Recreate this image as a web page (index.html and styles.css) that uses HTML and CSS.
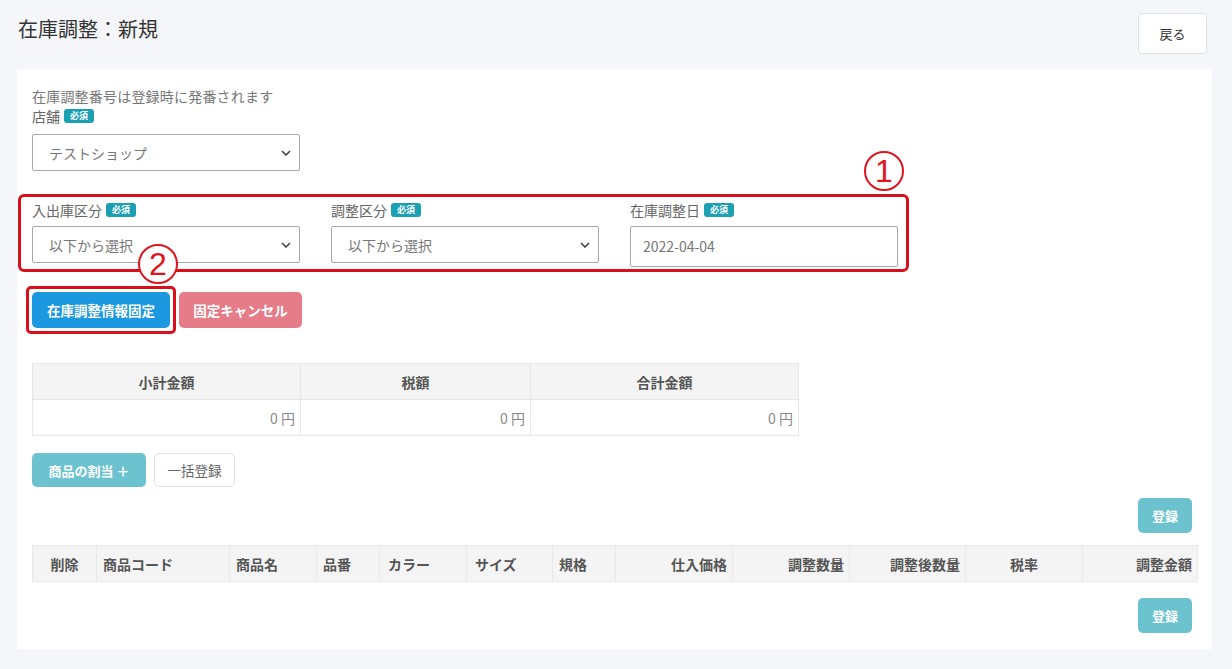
FILE: index.html
```html
<!DOCTYPE html>
<html lang="ja">
<head>
<meta charset="utf-8">
<title>在庫調整：新規</title>
<link rel="stylesheet" href="styles.css">
</head>
<body>
<header class="page-head">
  <h1 class="title">在庫調整：新規</h1>
  <button class="btn-back">戻る</button>
</header>
<main class="card">
  <p class="note">在庫調整番号は登録時に発番されます</p>
  <div class="label">店舗<span class="badge">必須</span></div>
  <div class="select shop">
    <span>テストショップ</span>
    <svg class="chev" width="10" height="6" viewBox="0 0 10 6"><path d="M1 1l4 4 4-4" fill="none" stroke="#444" stroke-width="1.6"/></svg>
  </div>

  <div class="mark-box">
    <div class="field">
      <div class="label">入出庫区分<span class="badge">必須</span></div>
      <div class="select">
        <span>以下から選択</span>
        <svg class="chev" width="10" height="6" viewBox="0 0 10 6"><path d="M1 1l4 4 4-4" fill="none" stroke="#444" stroke-width="1.6"/></svg>
      </div>
    </div>
    <div class="field">
      <div class="label">調整区分<span class="badge">必須</span></div>
      <div class="select">
        <span>以下から選択</span>
        <svg class="chev" width="10" height="6" viewBox="0 0 10 6"><path d="M1 1l4 4 4-4" fill="none" stroke="#444" stroke-width="1.6"/></svg>
      </div>
    </div>
    <div class="field">
      <div class="label">在庫調整日<span class="badge">必須</span></div>
      <div class="date">2022-04-04</div>
    </div>
    <div class="circ circ-1">1</div>
    <div class="circ circ-2">2</div>
  </div>

  <div class="action-row">
    <div class="mark-btn"><button class="btn btn-blue">在庫調整情報固定</button></div>
    <button class="btn btn-pink">固定キャンセル</button>
  </div>

  <table class="sum">
    <colgroup><col class="c268"><col class="c230"><col class="c268"></colgroup>
    <thead><tr><th>小計金額</th><th>税額</th><th>合計金額</th></tr></thead>
    <tbody><tr><td>0 円</td><td>0 円</td><td>0 円</td></tr></tbody>
  </table>

  <div class="tool-row">
    <button class="btn btn-teal">商品の割当 ＋</button>
    <button class="btn btn-white">一括登録</button>
  </div>

  <div class="reg-row"><button class="btn btn-teal btn-reg">登録</button></div>

  <table class="items">
    <colgroup>
      <col class="w64"><col class="w133"><col class="w87"><col class="w63"><col class="w87"><col class="w86"><col class="w63"><col class="w117"><col class="w117"><col class="w116"><col class="w117"><col class="w115">
    </colgroup>
    <thead>
      <tr>
        <th class="ac">削除</th>
        <th>商品コード</th>
        <th>商品名</th>
        <th>品番</th>
        <th class="pl8">カラー</th>
        <th class="pl8">サイズ</th>
        <th>規格</th>
        <th class="ar">仕入価格</th>
        <th class="ar">調整数量</th>
        <th class="ar">調整後数量</th>
        <th class="ac">税率</th>
        <th class="ar">調整金額</th>
      </tr>
    </thead>
  </table>

  <div class="reg-row reg-bottom"><button class="btn btn-teal btn-reg">登録</button></div>
</main>
</body>
</html>
```

FILE: styles.css
```css
* { box-sizing: border-box; }
html, body { margin: 0; padding: 0; }
body {
  background: #f4f6f9;
  font-family: "Noto Sans CJK JP", "Noto Sans", sans-serif;
  color: #333;
  width: 1232px;
  height: 669px;
  overflow: hidden;
}
.page-head {
  display: flex;
  justify-content: space-between;
  align-items: flex-start;
  padding: 13px 25px 0 18px;
  height: 69px;
}
.title {
  margin: 3px 0 0;
  font-size: 20px;
  font-weight: 400;
  line-height: 26px;
  color: #333;
}
.btn-back {
  width: 69px;
  height: 41px;
  background: #fff;
  border: 1px solid #dde1e6;
  border-radius: 4px;
  font-family: inherit;
  font-size: 13px;
  color: #333;
  padding: 0;
}
.card {
  position: relative;
  margin-left: 17px;
  width: 1195px;
  height: 580px;
  background: #fff;
  padding: 17px 15px 16px;
  border-radius: 2px;
}
.note {
  margin: 0;
  font-size: 14px;
  letter-spacing: 0.2px;
  line-height: 20px;
  color: #777;
}
.label {
  display: flex;
  align-items: center;
  font-size: 14px;
  line-height: 20px;
  color: #666;
}
.badge {
  display: inline-block;
  margin-left: 4px;
  width: 30px;
  height: 14px;
  border-radius: 3px;
  background: #1b9fb3;
  color: #fff;
  font-size: 9px;
  font-weight: 700;
  line-height: 14px;
  text-align: center;
}
.select {
  display: flex;
  justify-content: space-between;
  align-items: center;
  width: 268px;
  height: 37px;
  border: 1px solid #a8a8a8;
  border-radius: 2px;
  padding: 0 8px 0 16px;
  font-size: 14px;
  color: #777;
  margin-top: 6px;
}
.shop { margin-top: 8px; }
.chev { display: block; }
.date {
  width: 268px;
  height: 41px;
  border: 1px solid #a8a8a8;
  border-radius: 2px;
  padding: 0 12px;
  font-size: 14px;
  line-height: 39px;
  color: #777;
  margin-top: 6px;
}
.mark-box {
  position: relative;
  display: grid;
  grid-template-columns: 268px 268px 268px;
  column-gap: 31px;
  margin: 23px 0 0 -14px;
  width: 891px;
  border: 3px solid #d7101c;
  border-radius: 6px;
  padding: 3px 8px 2px 11px;
}
.circ {
  position: absolute;
  width: 40px;
  height: 40px;
  border: 2px solid #e0141e;
  border-radius: 50%;
  color: #e0141e;
  font-family: "Liberation Sans", sans-serif;
  font-size: 32px;
  line-height: 36px;
  text-align: center;
  background: transparent;
}
.circ-1 { right: 2px; top: -46px; }
.circ-2 { left: 117px; top: 47px; background: #fff; }
.action-row {
  display: flex;
  align-items: center;
  margin-top: 14px;
  gap: 3px;
}
.mark-btn {
  margin-left: -6px;
  border: 3px solid #d7101c;
  border-radius: 5px;
  padding: 3px;
}
.btn {
  font-family: inherit;
  border: 0;
  padding: 0;
  border-radius: 5px;
  font-weight: 700;
  color: #fff;
}
.btn-blue {
  display: block;
  width: 138px;
  height: 36px;
  background: #1b98e0;
  font-size: 13.5px;
}
.btn-pink {
  width: 123px;
  height: 36px;
  background: #e57c87;
  font-size: 13.5px;
}
.sum {
  margin-top: 29px;
  border-collapse: collapse;
  table-layout: fixed;
  width: 766px;
  font-size: 14px;
}
.c268 { width: 268px; }
.c230 { width: 230px; }
.sum th, .sum td {
  border: 1px solid #e6e6e6;
  height: 36px;
  padding: 0 5px;
}
.sum th {
  background: #f4f4f4;
  color: #555;
  font-weight: 700;
  text-align: center;
}
.sum td {
  text-align: right;
  color: #888;
}
.tool-row {
  display: flex;
  gap: 8px;
  margin-top: 17px;
}
.btn-teal {
  background: #6cc3cf;
  font-size: 13px;
}
.tool-row .btn-teal {
  width: 114px;
  height: 34px;
}
.btn-white {
  width: 81px;
  height: 34px;
  background: #fff;
  border: 1px solid #e2e2e2;
  color: #666;
  font-weight: 400;
  font-size: 13.5px;
}
.reg-row {
  display: flex;
  justify-content: flex-end;
  padding-right: 5px;
  margin-top: 11px;
}
.btn-reg {
  width: 54px;
  height: 35px;
}
.reg-bottom { margin-top: 16px; }
.items {
  margin-top: 12px;
  border-collapse: collapse;
  table-layout: fixed;
  width: 1165px;
  font-size: 14px;
}
.items th {
  height: 36px;
  background: #f4f4f4;
  border: 1px solid #e8e8e8;
  color: #555;
  font-weight: 700;
  text-align: left;
  padding: 0 5px 0 6px;
  white-space: nowrap;
}
.items th.ac { text-align: center; padding: 0; }
.items th.ar { text-align: right; }
.items th.pl8 { padding-left: 8px; }
.w64 { width: 64px; } .w133 { width: 133px; } .w87 { width: 87px; } .w63 { width: 63px; }
.w86 { width: 86px; } .w117 { width: 117px; } .w116 { width: 116px; } .w115 { width: 115px; }
```
